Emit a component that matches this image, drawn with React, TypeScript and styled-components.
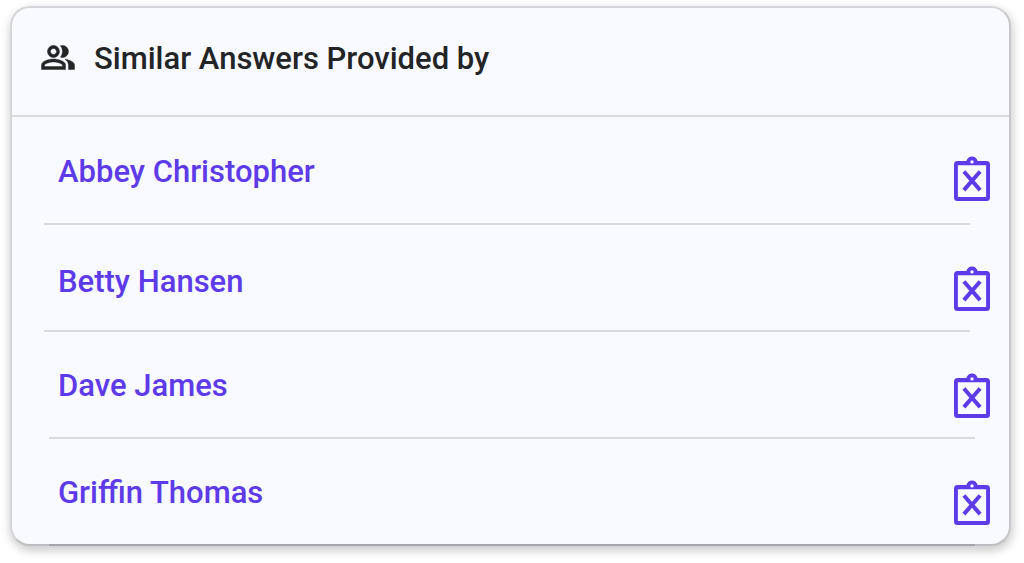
import React from "react";
import styled, { createGlobalStyle } from "styled-components";

const GlobalStyle = createGlobalStyle`
  * {
    box-sizing: border-box;
  }
  body {
    margin: 0;
    background: #ffffff;
    font-family: Roboto, "Liberation Sans", sans-serif;
  }
`;

const Page = styled.main`
  padding: 6px 13px 16px 10px;
`;

const Card = styled.section`
  border: 2px solid #d6d6da;
  border-right-color: #c8c8cb;
  border-bottom-color: #bfbfc3;
  border-radius: 20px;
  background: #f9faff;
  box-shadow: 1px 4px 10px 1px rgba(0, 0, 0, 0.2);
`;

const Header = styled.header`
  display: flex;
  align-items: flex-start;
  gap: 18px;
  padding: 31px 28px 36px;
  border-bottom: 2px solid #dadbe0;
  color: #222426;
`;

const Title = styled.h2`
  margin: 0;
  font-size: 31px;
  font-weight: 500;
  line-height: 40px;
`;

const List = styled.ul`
  margin: 0;
  padding: 1px 0 0;
  list-style: none;
`;

const Entry = styled.li<{ $indented: boolean }>`
  --line: #d9dade;
  display: grid;
  grid-template-columns: 1fr auto;
  align-items: start;
  height: 107px;
  padding: ${({ $indented }) => ($indented ? "36px" : "39px")} 18px 0 46px;
  background: linear-gradient(var(--line), var(--line)) no-repeat
    ${({ $indented }) => ($indented ? "37px" : "32px")} 100% / calc(100% - 71px) 2px;

  &:first-child {
    padding-top: 36px;
  }

  /* the last divider runs along the card's bottom border */
  &:last-child {
    --line: #a6a6aa;
    margin-bottom: -2px;
  }
`;

const Name = styled.a`
  justify-self: start;
  color: #5e3be8;
  font-size: 31px;
  font-weight: 500;
  line-height: 36px;
  text-decoration: none;
`;

const RemoveButton = styled.button<{ $indented: boolean }>`
  display: block;
  margin: ${({ $indented }) => ($indented ? "5px" : "2px")} 0 0;
  padding: 0;
  border: 0;
  background: none;
  color: #5e3be8;
  cursor: pointer;
`;

const PeopleIcon = () => (
  <svg
    width="36"
    height="37"
    viewBox="0 0 24 24"
    preserveAspectRatio="xMidYMid"
    fill="currentColor"
    stroke="currentColor"
    strokeWidth="0.3"
    aria-hidden="true"
  >
    <path d="M16.670 13.130C18.040 14.060 19 15.320 19 17v3h4v-3c0-2.180-3.570-3.470-6.330-3.870z" />
    <path d="M15 12c2.210 0 4-1.790 4-4s-1.790-4-4-4c-.47 0-.91.1-1.330.24a5.980 5.980 0 0 1 0 7.520c.42.14.86.24 1.330.24z" />
    <path d="M9 12c2.210 0 4-1.790 4-4s-1.790-4-4-4-4 1.790-4 4 1.790 4 4 4zm0-6c1.100 0 2 .9 2 2s-.9 2-2 2-2-.9-2-2 .9-2 2-2z" />
    <path d="M9 13c-2.670 0-8 1.340-8 4v3h16v-3c0-2.660-5.330-4-8-4zm6 5H3v-.99C3.200 16.290 6.300 15 9 15s5.800 1.290 6 2v1z" />
  </svg>
);

const ClipboardX = () => (
  <svg width="38" height="46" viewBox="0 0 38 46" fill="none" aria-hidden="true">
    <path
      fill="currentColor"
      fillRule="evenodd"
      d="M4.500 5H13.400C14 2.300 16.200 .4 19 .4S24 2.300 24.600 5H33.500A3.500 3.500 0 0 1 37 8.500V41.500A3.500 3.500 0 0 1 33.500 45H4.500A3.500 3.500 0 0 1 1 41.500V8.500A3.500 3.500 0 0 1 4.500 5ZM4.900 9.300V40.900H33.100V9.300ZM19 4.200A1.700 1.700 0 1 0 19 7.600A1.700 1.700 0 1 0 19 4.200Z"
    />
    <path d="M10.900 15.500L27.100 34.100M27.100 15.500L10.900 34.100" stroke="currentColor" strokeWidth="4" />
  </svg>
);

const people = [
  { name: "Abbey Christopher", indented: false },
  { name: "Betty Hansen", indented: false },
  { name: "Dave James", indented: true },
  { name: "Griffin Thomas", indented: true },
];

export default function App() {
  return (
    <Page>
      <GlobalStyle />
      <Card>
        <Header>
          <PeopleIcon />
          <Title>Similar Answers Provided by</Title>
        </Header>
        <List>
          {people.map(({ name, indented }) => (
            <Entry key={name} $indented={indented}>
              <Name href="#">{name}</Name>
              <RemoveButton type="button" $indented={indented} aria-label={`Remove ${name}`}>
                <ClipboardX />
              </RemoveButton>
            </Entry>
          ))}
        </List>
      </Card>
    </Page>
  );
}
